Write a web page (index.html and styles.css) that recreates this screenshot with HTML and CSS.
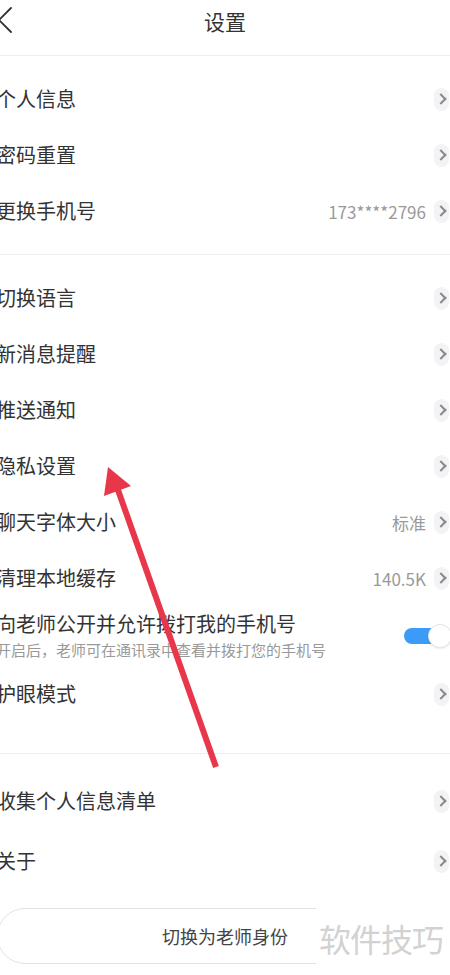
FILE: index.html
```html
<!DOCTYPE html>
<html lang="zh-CN">
<head>
    <meta charset="UTF-8">
    <meta name="viewport" content="width=device-width, initial-scale=1.0">
    <title>设置</title>
    <link rel="stylesheet" href="styles.css">
</head>
<body>
    <div class="page">
        <div class="topbar">
            <svg class="back" width="14" height="28" viewBox="0 0 14 28">
                <path d="M12 2 L0 14 L12 26" fill="none" stroke="#333" stroke-width="1.8" stroke-linecap="round" stroke-linejoin="round"/>
            </svg>
            <h1>设置</h1>
        </div>

        <div class="group first">
            <div class="row"><span class="label">个人信息</span><span class="go"></span></div>
            <div class="row"><span class="label">密码重置</span><span class="go"></span></div>
            <div class="row"><span class="label">更换手机号</span><span class="value">173****2796</span><span class="go"></span></div>
        </div>

        <div class="group second">
            <div class="row"><span class="label">切换语言</span><span class="go"></span></div>
            <div class="row"><span class="label">新消息提醒</span><span class="go"></span></div>
            <div class="row"><span class="label">推送通知</span><span class="go"></span></div>
            <div class="row"><span class="label">隐私设置</span><span class="go"></span></div>
            <div class="row"><span class="label">聊天字体大小</span><span class="value">标准</span><span class="go"></span></div>
            <div class="row"><span class="label">清理本地缓存</span><span class="value">140.5K</span><span class="go"></span></div>
            <div class="row tall">
                <div class="texts">
                    <span class="label">向老师公开并允许拨打我的手机号</span>
                    <span class="sub">开启后，老师可在通讯录中查看并拨打您的手机号</span>
                </div>
                <div class="toggle on"><div class="knob"></div></div>
            </div>
            <div class="row"><span class="label">护眼模式</span><span class="go"></span></div>
        </div>

        <div class="group third">
            <div class="row wide"><span class="label">收集个人信息清单</span><span class="go"></span></div>
            <div class="row wide"><span class="label">关于</span><span class="go"></span></div>
        </div>

        <div class="footer">
            <button class="switch-btn">切换为老师身份</button>
        </div>

        <div class="watermark">软件技巧</div>

        <svg class="arrow" width="450" height="975" viewBox="0 0 450 975">
            <line x1="216" y1="767" x2="118" y2="490" stroke="#e8364a" stroke-width="6"/>
            <polygon points="108,467 131,486 104,496" fill="#e8364a"/>
        </svg>
    </div>
</body>
</html>
```

FILE: styles.css
```css
* {
    margin: 0;
    padding: 0;
    box-sizing: border-box;
}

body {
    font-family: "Noto Sans CJK SC", "Noto Sans", sans-serif;
    background: #fff;
    color: #333;
    width: 450px;
    height: 975px;
    overflow: hidden;
}

.page {
    position: relative;
    width: 450px;
    height: 975px;
}

.topbar {
    height: 56px;
    border-bottom: 1px solid #eeeeee;
    display: flex;
    align-items: center;
    justify-content: center;
    position: relative;
}

.topbar h1 {
    font-size: 21px;
    font-weight: 400;
    color: #333;
    margin-top: -13px;
}

.back {
    position: absolute;
    left: -1px;
    top: 6px;
}

.group {
    border-bottom: 1px solid #eeeeee;
}

.group.first {
    padding: 15px 0;
}

.group.second {
    padding: 15px 0 31px;
}

.group.third {
    padding-top: 17px;
    border-bottom: none;
}

.row {
    height: 56px;
    display: flex;
    align-items: center;
    padding-right: 1px;
}

.row.wide {
    height: 60px;
}

.row.tall {
    height: 60px;
}

.label {
    flex: 1;
    font-size: 20px;
    line-height: 26px;
    margin-left: -4px;
    color: #333;
    white-space: nowrap;
}

.value {
    font-size: 17px;
    color: #9a9a9a;
    margin-right: 8px;
}

.go {
    width: 15px;
    height: 23px;
    border-radius: 8px;
    background: #f3f3f5;
    display: flex;
    align-items: center;
    justify-content: center;
}

.go::after {
    content: "";
    width: 6px;
    height: 6px;
    border-top: 2px solid #8a8a8a;
    border-right: 2px solid #8a8a8a;
    transform: translateX(-1px) rotate(45deg);
}

.texts {
    flex: 1;
    display: flex;
    flex-direction: column;
    gap: 2px;
}

.texts .label {
    flex: none;
}

.sub {
    font-size: 15px;
    line-height: 22px;
    color: #999;
    margin-left: -4px;
    white-space: nowrap;
}

.toggle {
    position: relative;
    width: 48px;
    height: 24px;
    margin-right: -3px;
    flex-shrink: 0;
}

.toggle::before {
    content: "";
    position: absolute;
    left: 0;
    top: 4px;
    width: 40px;
    height: 16px;
    border-radius: 8px;
    background: #3b9bf6;
}

.knob {
    position: absolute;
    right: 0;
    top: 0;
    width: 24px;
    height: 24px;
    border-radius: 50%;
    background: #fff;
    border: 1px solid #e3e3e3;
    box-shadow: 0 1px 2px rgba(0, 0, 0, 0.08);
}

.footer {
    padding-top: 17px;
    margin: 0 -3px;
}

.switch-btn {
    width: 100%;
    height: 56px;
    border: 1px solid #e2e2e2;
    border-radius: 28px;
    background: #fff;
    font-family: inherit;
    font-size: 18px;
    color: #444;
}

.watermark {
    position: absolute;
    left: 316px;
    top: 902px;
    width: 134px;
    height: 73px;
    background: #fff;
    font-size: 32px;
    line-height: 73px;
    color: #d2d2d2;
    padding-left: 3px;
    letter-spacing: -1px;
}

.arrow {
    position: absolute;
    left: 0;
    top: 0;
    pointer-events: none;
}
```
